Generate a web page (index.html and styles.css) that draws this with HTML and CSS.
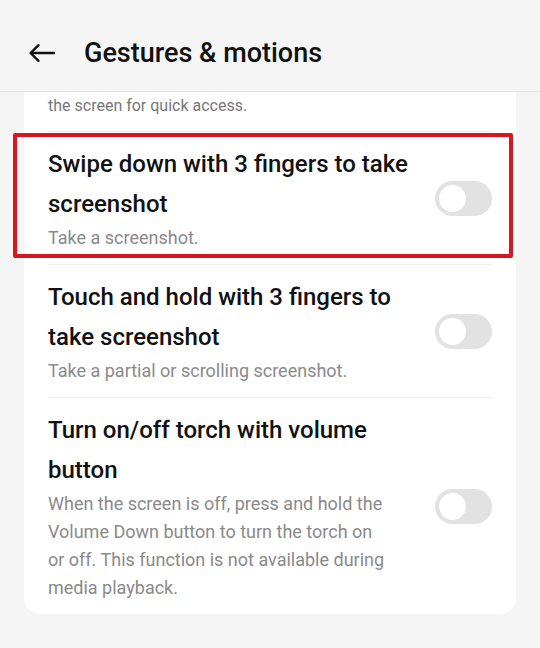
FILE: index.html
```html
<!DOCTYPE html>
<html lang="en">
<head>
<meta charset="utf-8">
<title>Gestures &amp; motions</title>
<link rel="stylesheet" href="styles.css">
</head>
<body>
<div class="screen">
  <header class="topbar">
    <span class="back" aria-label="Back">
      <svg width="28" height="20" viewBox="0 0 28 20" fill="none" stroke="#111" stroke-width="2.4" stroke-linecap="round" stroke-linejoin="round">
        <path d="M26 10H3"/>
        <path d="M10.5 2.2L2.6 10l7.9 7.8"/>
      </svg>
    </span>
    <h1 class="title">Gestures &amp; motions</h1>
  </header>
  <main class="content">
    <section class="card">
      <div class="item item-partial">
        <div class="text">
          <p class="sub">the screen for quick access.</p>
        </div>
      </div>
      <div class="item highlighted">
        <div class="text">
          <p class="name">Swipe down with 3 fingers to take screenshot</p>
          <p class="sub">Take a screenshot.</p>
        </div>
        <span class="switch"><span class="knob"></span></span>
      </div>
      <div class="item">
        <div class="text">
          <p class="name">Touch and hold with 3 fingers to take screenshot</p>
          <p class="sub">Take a partial or scrolling screenshot.</p>
        </div>
        <span class="switch"><span class="knob"></span></span>
      </div>
      <div class="item last">
        <div class="text">
          <p class="name">Turn on/off torch with volume button</p>
          <p class="sub">When the screen is off, press and hold the Volume Down button to turn the torch on or off. This function is not available during media playback.</p>
        </div>
        <span class="switch"><span class="knob"></span></span>
      </div>
    </section>
  </main>
</div>
</body>
</html>
```

FILE: styles.css
```css
* { box-sizing: border-box; }
html, body {
  margin: 0;
  padding: 0;
  background: #f5f5f5;
  font-family: Roboto, "Noto Sans", "Liberation Sans", sans-serif;
  color: #111;
}
.screen {
  width: 540px;
  height: 648px;
  overflow: hidden;
  display: flex;
  flex-direction: column;
}
.topbar {
  height: 92px;
  flex: none;
  display: flex;
  align-items: center;
  padding: 14px 0 0 28px;
  border-bottom: 1px solid #e2e2e2;
  background: #f5f5f5;
}
.back {
  display: flex;
  width: 28px;
  height: 20px;
  margin-right: 28px;
}
.title {
  margin: 0;
  font-size: 27px;
  font-weight: 500;
  color: #111;
}
.content {
  flex: 1;
  padding: 0 24px;
}
.card {
  background: #fff;
  border-radius: 0 0 16px 16px;
}
.item {
  position: relative;
  margin: 0 24px;
  display: flex;
  align-items: center;
  gap: 16px;
  padding: 12px 0 12px;
  border-bottom: 1px solid #ececec;
}
.item.last { border-bottom: none; }
.item-partial { padding: 0 0 11px; }
.text { flex: 1; min-width: 0; }
.name {
  margin: 0;
  font-size: 24px;
  line-height: 40px;
  font-weight: 500;
  color: #111;
}
.sub {
  margin: 0;
  max-width: 343px;
  font-size: 18px;
  line-height: 28px;
  color: #8a8a8a;
}
.item-partial .sub { font-size: 16px; color: #777; }
.switch {
  flex: none;
  position: relative;
  width: 57px;
  height: 35px;
  border-radius: 18px;
  background: #e2e2e2;
}
.knob {
  position: absolute;
  left: 4px;
  top: 4px;
  width: 27px;
  height: 27px;
  border-radius: 50%;
  background: #fff;
}
.highlighted::after {
  content: "";
  position: absolute;
  left: -35px;
  right: -21px;
  top: 1px;
  bottom: 6px;
  border: 4px solid #d7171f;
  border-radius: 2px;
  pointer-events: none;
}
```
